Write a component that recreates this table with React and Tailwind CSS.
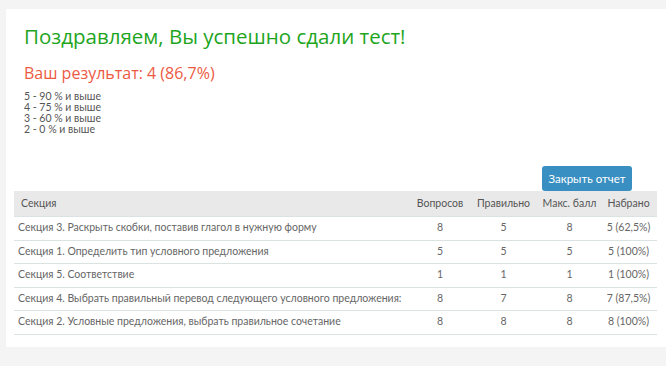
import React from "react";

const rows = [
  ["Секция 3. Раскрыть скобки, поставив глагол в нужную форму", "8", "5", "8", "5 (62,5%)"],
  ["Секция 1. Определить тип условного предложения", "5", "5", "5", "5 (100%)"],
  ["Секция 5. Соответствие", "1", "1", "1", "1 (100%)"],
  ["Секция 4. Выбрать правильный перевод следующего условного предложения:", "8", "7", "8", "7 (87,5%)"],
  ["Секция 2. Условные предложения, выбрать правильное сочетание", "8", "8", "8", "8 (100%)"],
];

export default function App() {
  return (
    <div className="w-[666px] h-[366px] bg-[#f4f4f4] pt-[9px] pl-[6px] overflow-hidden">
      <div className="bg-white w-[660px] h-[338px] flex flex-col">
        <div className="pl-[18px] pt-[13px]">
          <h1 className="text-[20.5px] leading-[28px] text-[#1ea51e] font-['Open_Sans',sans-serif]">
            Поздравляем, Вы успешно сдали тест!
          </h1>
          <div className="mt-[12px] text-[16px] leading-[22px] text-[#ec5a44] font-['Open_Sans',sans-serif]">
            Ваш результат: 4 (86,7%)
          </div>
          <div className="mt-[7px] text-[10.5px] leading-[11px] text-[#555] font-['Lato',sans-serif]">
            <div className="h-[11px]">5 - 90 % и выше</div>
            <div className="h-[11px]">4 - 75 % и выше</div>
            <div className="h-[11px]">3 - 60 % и выше</div>
            <div className="h-[11px]">2 - 0 % и выше</div>
          </div>
        </div>
        <div className="ml-[8px] w-[643px] mt-[31px] font-['Lato',sans-serif] text-[10.5px] text-[#666]">
          <div className="flex justify-end pr-[25px]">
            <button className="w-[90px] h-[25px] rounded-[3px] bg-[#3a8fc2] text-white text-[11.5px]">
              Закрыть отчет
            </button>
          </div>
          <div className="grid grid-cols-[396px_60px_67px_65px_55px] h-[26px] items-center bg-[#e9e9e9] border-b border-[#dae2e2] text-[#555]">
            <div className="pl-[7px]">Секция</div>
            <div className="text-center">Вопросов</div>
            <div className="text-center">Правильно</div>
            <div className="text-center">Макс. балл</div>
            <div className="text-center pr-[2px]">Набрано</div>
          </div>
          {rows.map((r, i) => (
            <div
              key={i}
              className="grid grid-cols-[396px_60px_67px_65px_55px] h-[23.5px] items-center border-b border-[#dae2e2]"
            >
              <div className="pl-[4px] whitespace-nowrap">{r[0]}</div>
              <div className="text-center">{r[1]}</div>
              <div className="text-center">{r[2]}</div>
              <div className="text-center">{r[3]}</div>
              <div className="text-center pr-[2px]">{r[4]}</div>
            </div>
          ))}
        </div>
      </div>
    </div>
  );
}
